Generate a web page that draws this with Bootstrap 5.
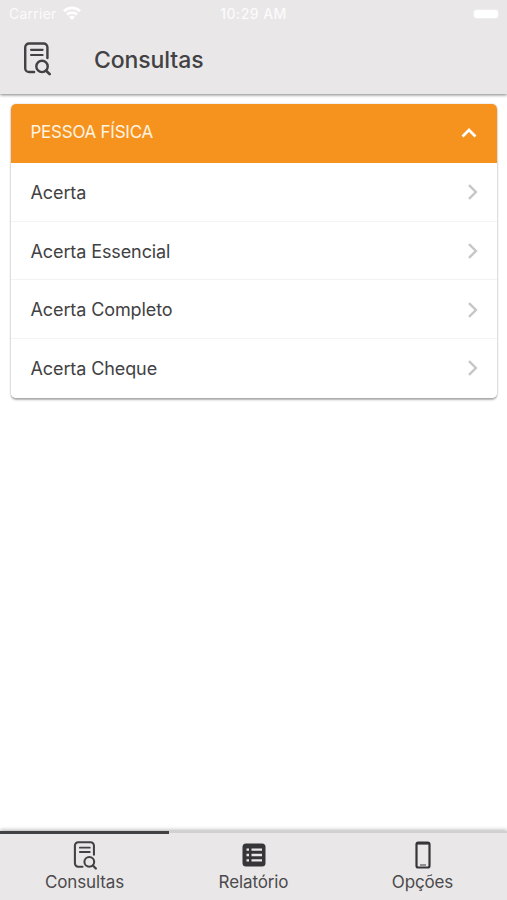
<!DOCTYPE html>
<html lang="pt-BR">
<head>
<meta charset="utf-8">
<meta name="viewport" content="width=device-width, initial-scale=1">
<title>Consultas</title>
<link href="https://cdn.jsdelivr.net/npm/bootstrap@5.3.0/dist/css/bootstrap.min.css" rel="stylesheet">
<style>
  body { font-family: Inter, "Liberation Sans", sans-serif; color: #424143; background: #fff; }
  svg { display: block; flex: none; }
  .app-head { height: 94px; background: #e9e7e8; box-shadow: 0 1px 3px rgba(0,0,0,.5); }
  .status-bar { height: 28px; padding: 0 9px; font-size: 14px; line-height: 28px; color: #fbfbfb; }
  .carrier { letter-spacing: .25px; }
  .clock { font-weight: 500; letter-spacing: .45px; }
  .battery { width: 24px; height: 8px; border-radius: 3px; background: #fff; box-shadow: 0 0 2px #fff; }
  .title-bar { height: 62px; padding-left: 23px; gap: 43px; }
  .page-title { font-size: 23px; font-weight: 500; line-height: 30px; letter-spacing: -.1px; padding-top: 1px; }
  .panel { margin: 10px 10px 0 11px; border-radius: 5px; box-shadow: 0 2px 2px rgba(0,0,0,.3), 0 0 2px rgba(0,0,0,.22); }
  .panel-head { height: 59px; padding: 0 19px 2px 19.5px; background: #f6931e; border-radius: 5px 5px 0 0; color: #fff4e2; font-size: 17px; letter-spacing: -.25px; }
  .panel .entry { height: 58.7px; padding: 1px 18.500px 0 19.5px; border: 0; border-bottom: 1px solid #f3f3f3; color: #424143; font-size: 18px; letter-spacing: -.1px; background: #fff; }
  .panel .entry:last-child { border-bottom: 0; border-radius: 0 0 5px 5px; padding-top: 0; }
  .tab-bar { height: 69px; background: #e9e7e8; box-shadow: 0 -1px 4px rgba(0,0,0,.3); border-top: 2px solid #d2d1d1; }
  .tab-bar .tab { height: 69px; margin-top: -2px; padding: 7px 0 0; border-radius: 0; border-top: 3px solid transparent; color: #4b4a4c; font-size: 17px; line-height: 24px; letter-spacing: -.12px; }
  .tab-bar .tab.active { border-top-color: #424143; }
  .tab-icon { height: 28px; margin-bottom: 1px; }
</style>
<script src="https://cdn.jsdelivr.net/npm/bootstrap@5.3.0/dist/js/bootstrap.bundle.min.js"></script>
</head>
<body>
<svg width="0" height="0" class="position-absolute" aria-hidden="true">
  <symbol id="doc-search" viewBox="0 0 29 35">
    <g fill="none" stroke="#424143" stroke-width="2.5" stroke-linecap="round">
      <path d="M25.300 16.500V5.500a4 4 0 0 0-4-4H6.300a4 4 0 0 0-4 4v21.500a4 4 0 0 0 4 4H11.500"/>
      <path d="M8.300 8h12M8.300 13.300h12" stroke-width="2.200"/>
      <circle cx="19.700" cy="25.200" r="5.900"/>
      <path d="M24 29.600l3.600 3.600" stroke-width="2.800"/>
    </g>
  </symbol>
  <symbol id="chev" viewBox="0 0 12 18">
    <path d="M2 2.200l6.900 6.800L2 15.800" fill="none" stroke="#c6c6c6" stroke-width="2.400"/>
  </symbol>
</svg>
<div class="d-flex flex-column vh-100">
  <header class="app-head">
    <div class="status-bar d-flex align-items-center">
      <div class="col d-flex align-items-center gap-2"><span class="carrier">Carrier</span>
        <svg width="18" height="14" viewBox="0 0 18 14" style="margin-left:-2px;margin-top:-2px"><g fill="none" stroke="#fff" stroke-width="2.700"><path d="M1 5.200a11.500 11.500 0 0 1 16 0M4 8.600a7.200 7.200 0 0 1 10 0"/></g><path d="M9 14L6 11a4.200 4.200 0 0 1 6 0z" fill="#fff"/></svg>
      </div>
      <div class="clock">10:29 AM</div>
      <div class="col d-flex justify-content-end"><div class="battery"></div></div>
    </div>
    <div class="title-bar d-flex align-items-center">
      <svg width="28" height="34"><use href="#doc-search"/></svg>
      <h1 class="page-title mb-0">Consultas</h1>
    </div>
  </header>
  <main class="flex-grow-1">
    <section class="panel">
      <div class="panel-head d-flex align-items-center justify-content-between">
        <span>PESSOA FÍSICA</span>
        <svg width="18" height="12" viewBox="0 0 18 12"><path d="M2.500 9.500L9 3l6.500 6.500" fill="none" stroke="#fff" stroke-width="2.700"/></svg>
      </div>
      <div class="list-group list-group-flush">
        <a class="entry list-group-item d-flex align-items-center justify-content-between"><span>Acerta</span><svg width="12" height="18"><use href="#chev"/></svg></a>
        <a class="entry list-group-item d-flex align-items-center justify-content-between"><span>Acerta Essencial</span><svg width="12" height="18"><use href="#chev"/></svg></a>
        <a class="entry list-group-item d-flex align-items-center justify-content-between"><span>Acerta Completo</span><svg width="12" height="18"><use href="#chev"/></svg></a>
        <a class="entry list-group-item d-flex align-items-center justify-content-between"><span>Acerta Cheque</span><svg width="12" height="18"><use href="#chev"/></svg></a>
      </div>
    </section>
  </main>
  <nav class="tab-bar nav nav-fill flex-nowrap">
    <a class="tab col-4 active d-flex flex-column align-items-center text-decoration-none">
      <span class="tab-icon d-flex align-items-center"><svg width="24" height="29"><use href="#doc-search"/></svg></span>Consultas</a>
    <a class="tab col-4 d-flex flex-column align-items-center text-decoration-none">
      <span class="tab-icon d-flex align-items-center"><svg width="24" height="24" viewBox="0 0 24 24"><rect x=".5" y=".5" width="23" height="23" rx="3.500" fill="#363537"/><path d="M9.500 6.700H20M9.500 12H20M9.500 17.300H20M4.500 6.700H7M4.500 12H7M4.500 17.300H7" stroke="#e9e7e8" stroke-width="2.300"/></svg></span>Relatório</a>
    <a class="tab col-4 d-flex flex-column align-items-center text-decoration-none">
      <span class="tab-icon d-flex align-items-center"><svg width="16" height="28" viewBox="0 0 16 28"><rect x="1.500" y="1.500" width="13" height="25" rx="1.800" fill="none" stroke="#363537" stroke-width="2.200"/><path d="M2 2.400h12" stroke="#363537" stroke-width="2.400"/><path d="M5 24h6" stroke="#6b6a6c" stroke-width="1.400"/></svg></span>Opções</a>
  </nav>
</div>
</body>
</html>
